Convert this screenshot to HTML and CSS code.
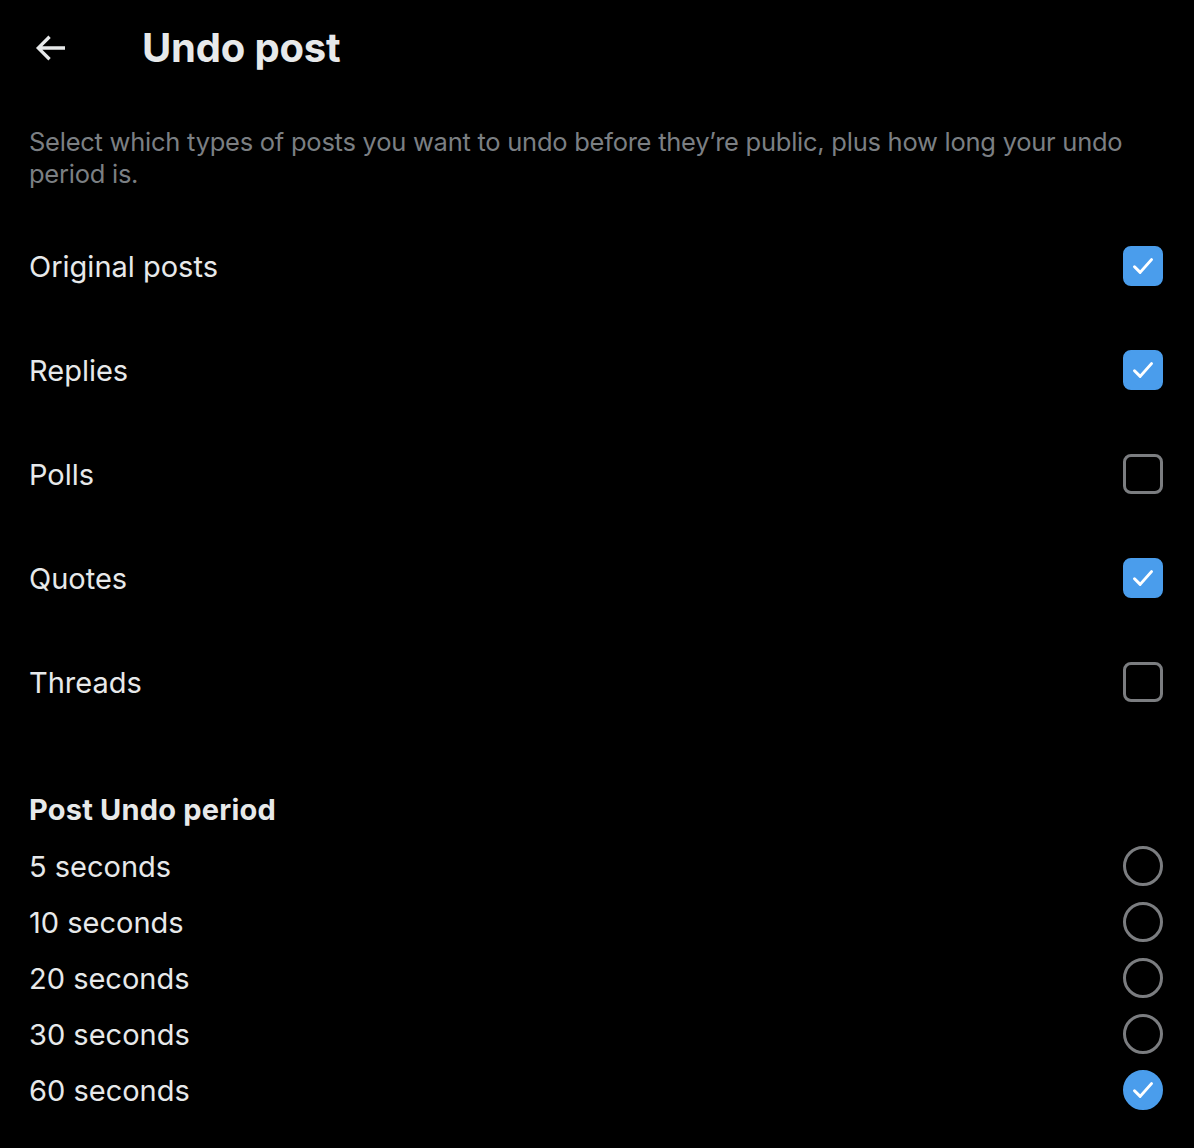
FILE: index.html
```html
<!DOCTYPE html>
<html lang="en">
<head>
<meta charset="utf-8">
<title>Undo post</title>
<link rel="stylesheet" href="styles.css">
</head>
<body>
<div class="page">
  <header class="header">
    <button class="back" aria-label="Back">
      <svg viewBox="0 0 24 24" width="40" height="40"><path d="M7.414 13l5.043 5.04-1.414 1.42L3.586 12l7.457-7.46 1.414 1.42L7.414 11H21v2H7.414z" fill="#e7e9ea"/></svg>
    </button>
    <h1 class="title">Undo post</h1>
  </header>

  <p class="desc">Select which types of posts you want to undo before they’re public, plus how long your undo period is.</p>

  <ul class="checks">
    <li class="row"><span>Original posts</span><span class="box on"><svg viewBox="0 0 24 24"><path d="M6 12.5l4 4 8-9"/></svg></span></li>
    <li class="row"><span>Replies</span><span class="box on"><svg viewBox="0 0 24 24"><path d="M6 12.5l4 4 8-9"/></svg></span></li>
    <li class="row"><span>Polls</span><span class="box"></span></li>
    <li class="row"><span>Quotes</span><span class="box on"><svg viewBox="0 0 24 24"><path d="M6 12.5l4 4 8-9"/></svg></span></li>
    <li class="row"><span>Threads</span><span class="box"></span></li>
  </ul>

  <h2 class="section">Post Undo period</h2>
  <ul class="radios">
    <li class="rrow"><span>5 seconds</span><span class="radio"></span></li>
    <li class="rrow"><span>10 seconds</span><span class="radio"></span></li>
    <li class="rrow"><span>20 seconds</span><span class="radio"></span></li>
    <li class="rrow"><span>30 seconds</span><span class="radio"></span></li>
    <li class="rrow"><span>60 seconds</span><span class="radio on"><svg viewBox="0 0 24 24"><path d="M6 12.5l4 4 8-9"/></svg></span></li>
  </ul>
</div>
</body>
</html>
```

FILE: styles.css
```css
* { box-sizing: border-box; }
html, body { margin: 0; padding: 0; background: #000; }
body {
  font-family: Inter, "Noto Sans", "Liberation Sans", sans-serif;
  color: #e7e9ea;
  width: 1194px;
  height: 1148px;
  overflow: hidden;
}
.page { padding: 0 31px 0 29px; }
.header {
  height: 96px;
  display: flex;
  align-items: center;
}
.back {
  background: none;
  border: 0;
  padding: 0;
  margin: 0 0 0 1px;
  width: 112px;
  height: 40px;
  display: flex;
  align-items: center;
  cursor: pointer;
}
.back svg { display: block; }
.title {
  margin: 0;
  font-size: 40px;
  font-weight: 700;
  letter-spacing: -0.2px;
  line-height: 48px;
}
.desc {
  margin: 30px 0 24px;
  font-size: 25.5px;
  line-height: 32px;
  color: #7b7f83;
  letter-spacing: -0.25px;
}
.checks, .radios { list-style: none; margin: 0; padding: 0; }
.row {
  height: 104px;
  display: flex;
  align-items: center;
  justify-content: space-between;
  font-size: 29px;
  letter-spacing: 0;
}
.box {
  width: 40px;
  height: 40px;
  border: 3px solid #7b7d80;
  border-radius: 8px;
  display: flex;
  align-items: center;
  justify-content: center;
}
.box.on, .radio.on {
  background: #4a9dec;
  border-color: #4a9dec;
}
.box svg, .radio svg { width: 34px; height: 34px; }
.box path, .radio path {
  fill: none;
  stroke: #fff;
  stroke-width: 2.1;
  stroke-linecap: round;
  stroke-linejoin: round;
}
.section {
  margin: 56px 0 8px;
  font-size: 29px;
  font-weight: 700;
  line-height: 40px;
  letter-spacing: 0.2px;
}
.rrow {
  height: 56px;
  display: flex;
  align-items: center;
  justify-content: space-between;
  font-size: 29px;
  letter-spacing: 0;
}
.radio {
  width: 40px;
  height: 40px;
  border: 3px solid #7b7d80;
  border-radius: 50%;
  display: flex;
  align-items: center;
  justify-content: center;
}
```
